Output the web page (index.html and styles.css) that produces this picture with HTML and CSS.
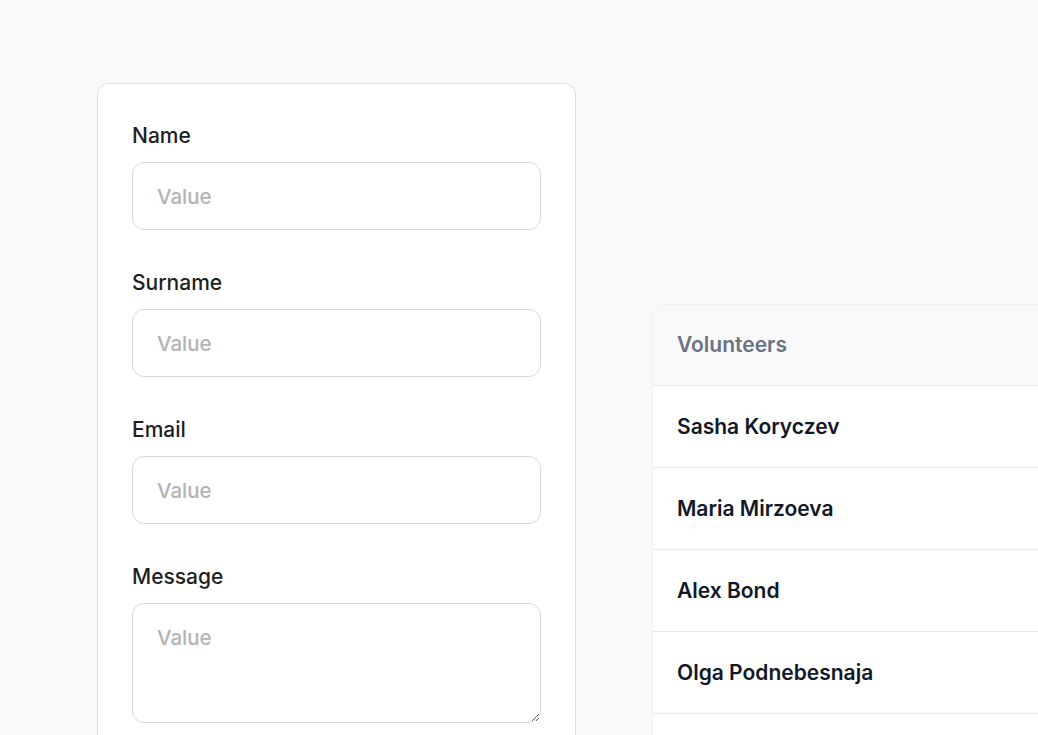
FILE: index.html
```html
<!DOCTYPE html>
<html lang="en">
<head>
<meta charset="utf-8">
<title>Volunteer form</title>
<link rel="stylesheet" href="styles.css">
</head>
<body>
<main class="page">
  <form class="form-card">
    <label class="field">
      <span class="field-label">Name</span>
      <input class="field-input" type="text" placeholder="Value">
    </label>
    <label class="field">
      <span class="field-label">Surname</span>
      <input class="field-input" type="text" placeholder="Value">
    </label>
    <label class="field">
      <span class="field-label">Email</span>
      <input class="field-input" type="email" placeholder="Value">
    </label>
    <label class="field">
      <span class="field-label">Message</span>
      <textarea class="field-input field-textarea" placeholder="Value"></textarea>
    </label>
    <div class="form-rest"></div>
  </form>

  <section class="table-card">
    <table class="vol-table">
      <thead>
        <tr><th class="col-name">Volunteers</th><th class="col-extra"></th></tr>
      </thead>
      <tbody>
        <tr><td>Sasha Koryczev</td><td></td></tr>
        <tr><td>Maria Mirzoeva</td><td></td></tr>
        <tr><td>Alex Bond</td><td></td></tr>
        <tr><td>Olga Podnebesnaja</td><td></td></tr>
        <tr><td>&nbsp;</td><td></td></tr>
      </tbody>
    </table>
  </section>
</main>
</body>
</html>
```

FILE: styles.css
```css
* { box-sizing: border-box; }

html, body {
  margin: 0;
  height: 100%;
  overflow: hidden;
  background: #f8f9fb;
  font-family: Inter, "Noto Sans", "Liberation Sans", sans-serif;
}

.page {
  display: flex;
  align-items: flex-start;
  gap: 76px;
  padding: 83px 0 0 97px;
  width: 1400px;
}

.form-card {
  flex: 0 0 479px;
  background: #ffffff;
  border: 1px solid #dedede;
  border-radius: 12px;
  padding: 38px 34px 0 34px;
  display: flex;
  flex-direction: column;
  gap: 39px;
}

.field {
  display: flex;
  flex-direction: column;
  gap: 12px;
}

.field-label {
  font-size: 21px;
  line-height: 28px;
  font-weight: 500;
  color: #1e1e1e;
}

.field-input {
  display: block;
  width: 100%;
  height: 68px;
  border: 1.5px solid #d9d9d9;
  border-radius: 12px;
  padding: 0 24px;
  font-family: inherit;
  font-size: 20.5px;
  font-weight: 500;
  color: #1e1e1e;
  background: #ffffff;
  outline: none;
}

.field-input::placeholder {
  color: #b3b3b3;
  opacity: 1;
}

.field-textarea {
  height: 120px;
  padding: 20px 24px;
  line-height: 28px;
  resize: vertical;
}

.form-rest {
  height: 60px;
}

.table-card {
  flex: 0 0 520px;
  margin-top: 221px;
  background: #ffffff;
  border: 1px solid #eef0f3;
  border-right: none;
  border-radius: 12px 0 0 12px;
  overflow: hidden;
}

.vol-table {
  width: 100%;
  border-collapse: collapse;
}

.vol-table th,
.vol-table td {
  text-align: left;
  padding: 0 24px;
  font-size: 21px;
  border-bottom: 1.5px solid #e8e9ed;
}

.vol-table th {
  height: 80px;
  background: #f8f9fb;
  color: #6b7280;
  font-weight: 600;
}

.vol-table td {
  height: 82px;
  color: #111827;
  font-weight: 600;
}

.col-name { width: 380px; }
```
